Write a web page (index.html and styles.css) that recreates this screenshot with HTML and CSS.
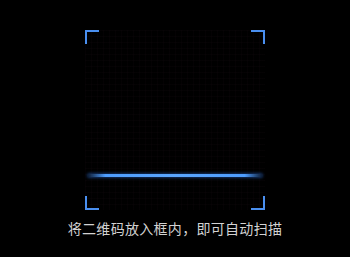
FILE: index.html
```html
<!DOCTYPE html>
<html lang="zh">
<head>
<meta charset="utf-8">
<link rel="stylesheet" href="styles.css">
</head>
<body>
<div class="page">
  <div class="frame">
    <span class="corner tl"></span>
    <span class="corner tr"></span>
    <span class="corner bl"></span>
    <span class="corner br"></span>
    <div class="scanline"></div>
  </div>
  <p class="hint">将二维码放入框内，即可自动扫描</p>
</div>
</body>
</html>
```
FILE: styles.css
```css
html, body {
  margin: 0;
  padding: 0;
  background: #000;
}
.page {
  width: 350px;
  height: 257px;
  display: flex;
  flex-direction: column;
  align-items: center;
  padding-top: 30px;
  box-sizing: border-box;
}
.frame {
  position: relative;
  width: 180px;
  height: 180px;
  background-image:
    linear-gradient(rgba(120, 60, 90, 0.04) 1px, transparent 1px),
    linear-gradient(90deg, rgba(120, 60, 90, 0.04) 1px, transparent 1px);
  background-size: 6px 6px;
}
.corner {
  position: absolute;
  width: 12px;
  height: 12px;
  border-color: #4a8fef;
  border-style: solid;
  border-width: 0;
}
.tl { left: 0; top: 0; border-top-width: 2px; border-left-width: 2px; }
.tr { right: 0; top: 0; border-top-width: 2px; border-right-width: 2px; }
.bl { left: 0; bottom: 0; border-bottom-width: 2px; border-left-width: 2px; }
.br { right: 0; bottom: 0; border-bottom-width: 2px; border-right-width: 2px; }
.scanline {
  position: absolute;
  left: 3px;
  right: 3px;
  top: 144px;
  height: 3px;
  border-radius: 2px;
  background: linear-gradient(90deg, rgba(60,140,255,0.2), #4d9dff 10%, #5aa6ff 50%, #4d9dff 90%, rgba(60,140,255,0.2));
  box-shadow: 0 0 3px 1px rgba(50, 130, 255, 0.4);
}
.hint {
  margin: 8px 0 0;
  font-family: "Noto Sans CJK SC", "Noto Sans", sans-serif;
  font-size: 14px;
  line-height: 20px;
  color: #d2d2d2;
  letter-spacing: 0.3px;
}
```
